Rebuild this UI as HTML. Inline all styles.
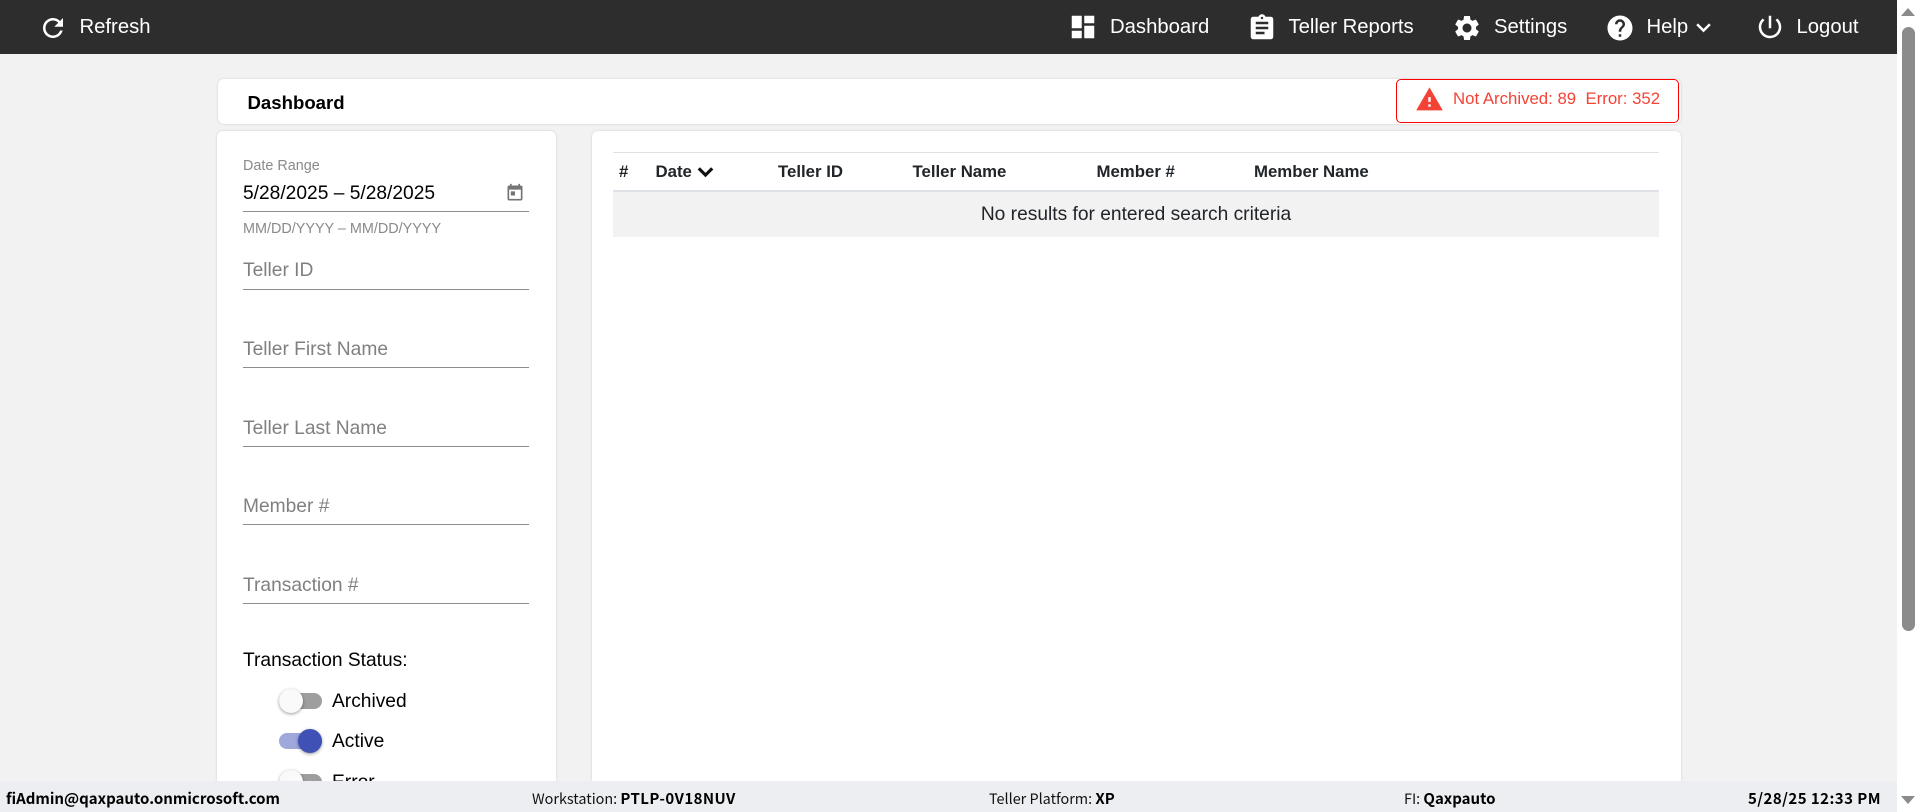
<!DOCTYPE html>
<html lang="en">
<head>
<meta charset="utf-8">
<title>Dashboard</title>
<style>
html,body{margin:0;padding:0;width:1920px;height:812px;overflow:hidden;background:#f2f2f2;font-family:"Liberation Sans",Arial,sans-serif;color:#000}
#root{position:relative;width:1920px;height:812px;overflow:hidden}
.a{position:absolute}
.t{position:absolute;white-space:nowrap;line-height:40px;height:40px}
svg{position:absolute;display:block}
#hdr{left:0;top:0;width:1897px;height:54px;background:#2d2d2d}
.n{color:#fff;font-size:20.3px;top:6.5px}
.card{background:#fff;border-radius:6px;box-shadow:0 0 2px rgba(0,0,0,.16)}
.ln{position:absolute;left:243px;width:286px;height:1px;background:#8c8c8c}
.ph{font-size:19.2px;color:#808080;left:243px}
.tog{position:absolute;left:279px;width:43px;height:16px;border-radius:8px;background:#9e9e9e}
.th{position:absolute;width:24px;height:24px;border-radius:50%;background:#fafafa;box-shadow:0 1px 3px rgba(0,0,0,.4)}
.lb{font-size:19.2px;left:332px}
.h{font-size:16.8px;font-weight:bold;color:#212529;top:152px}
#ft{left:0;top:781px;width:1897px;height:31px;background:#eceef1}
.f{font-family:"Noto Sans CJK SC","Liberation Sans",sans-serif;font-size:14.4px;top:-2.5px;color:#111}
.f b{font-weight:bold;color:#000;font-size:15px}
</style>
</head>
<body>
<div id="root">
<div id="hdr" class="a"></div>
<svg style="left:38px;top:12.7px" width="30" height="30" viewBox="0 0 24 24" fill="#fff"><path d="M17.65 6.35C16.2 4.9 14.21 4 12 4c-4.42 0-7.99 3.58-7.99 8s3.57 8 7.99 8c3.73 0 6.84-2.55 7.73-6h-2.08c-.82 2.33-3.04 4-5.65 4-3.31 0-6-2.69-6-6s2.69-6 6-6c1.66 0 3.14.69 4.22 1.78L13 11h7V4l-2.35 2.35z"/></svg>
<div class="t n" style="left:79.5px">Refresh</div>

<svg style="left:1068px;top:12px" width="30" height="30" viewBox="0 0 24 24" fill="#fff"><path d="M3 13h8V3H3v10zm0 8h8v-6H3v6zm10 0h8V11h-8v10zm0-18v6h8V3h-8z"/></svg>
<div class="t n" style="left:1110px">Dashboard</div>
<svg style="left:1247px;top:12.5px" width="30" height="30" viewBox="0 0 24 24" fill="#fff"><path d="M19 3h-4.18C14.4 1.84 13.3 1 12 1c-1.3 0-2.4.84-2.82 2H5c-1.1 0-2 .9-2 2v14c0 1.1.9 2 2 2h14c1.1 0 2-.9 2-2V5c0-1.1-.9-2-2-2zm-7 0c.55 0 1 .45 1 1s-.45 1-1 1-1-.45-1-1 .45-1 1-1zm2 14H7v-2h7v2zm3-4H7v-2h10v2zm0-4H7V7h10v2z"/></svg>
<div class="t n" style="left:1288.5px">Teller Reports</div>
<svg style="left:1452px;top:12.5px" width="30" height="30" viewBox="0 0 24 24" fill="#fff"><path d="M19.14 12.94c.04-.3.06-.61.06-.94 0-.32-.02-.64-.07-.94l2.03-1.58c.18-.14.23-.41.12-.61l-1.92-3.32c-.12-.22-.37-.29-.59-.22l-2.39.96c-.5-.38-1.03-.7-1.62-.94l-.36-2.54c-.04-.24-.24-.41-.48-.41h-3.84c-.24 0-.43.17-.47.41l-.36 2.54c-.59.24-1.13.57-1.62.94l-2.39-.96c-.22-.08-.47 0-.59.22L2.74 8.87c-.12.21-.08.47.12.61l2.03 1.58c-.05.3-.09.63-.09.94s.02.64.07.94l-2.03 1.58c-.18.14-.23.41-.12.61l1.92 3.32c.12.22.37.29.59.22l2.39-.96c.5.38 1.03.7 1.62.94l.36 2.54c.05.24.24.41.48.41h3.84c.24 0 .44-.17.47-.41l.36-2.54c.59-.24 1.13-.56 1.62-.94l2.39.96c.22.08.47 0 .59-.22l1.92-3.32c.12-.22.07-.47-.12-.61l-2.01-1.58zM12 15.6c-1.98 0-3.6-1.62-3.6-3.6s1.62-3.6 3.6-3.6 3.6 1.62 3.6 3.6-1.62 3.6-3.6 3.6z"/></svg>
<div class="t n" style="left:1494px">Settings</div>
<svg style="left:1605px;top:12.5px" width="30" height="30" viewBox="0 0 24 24" fill="#fff"><path d="M12 2C6.48 2 2 6.48 2 12s4.48 10 10 10 10-4.48 10-10S17.52 2 12 2zm1 17h-2v-2h2v2zm2.07-7.75l-.9.92C13.45 12.9 13 13.5 13 15h-2v-.5c0-1.1.45-2.1 1.17-2.83l1.24-1.26c.37-.36.59-.86.59-1.41 0-1.1-.9-2-2-2s-2 .9-2 2H8c0-2.21 1.79-4 4-4s4 1.79 4 4c0 .88-.36 1.68-.93 2.25z"/></svg>
<div class="t n" style="left:1646.5px">Help</div>
<svg style="left:1688.5px;top:12.5px" width="29" height="29" viewBox="0 0 24 24" fill="#fff"><path d="M7.41 8.59L12 13.17l4.59-4.58L18 10l-6 6-6-6 1.41-1.41z"/></svg>
<svg style="left:1754.6px;top:12.3px" width="30" height="30" viewBox="0 0 24 24" fill="#fff"><path d="M13 3h-2v10h2V3zm4.83 2.17l-1.42 1.42C17.99 7.86 19 9.81 19 12c0 3.87-3.13 7-7 7s-7-3.13-7-7c0-2.19 1.01-4.14 2.58-5.42L6.17 5.17C4.23 6.82 3 9.26 3 12c0 4.97 4.03 9 9 9s9-4.03 9-9c0-2.74-1.23-5.18-3.17-6.83z"/></svg>
<div class="t n" style="left:1796.5px">Logout</div>

<!-- title bar -->
<div class="a card" style="left:218px;top:79px;width:1463px;height:45px"></div>
<div class="t" style="left:247.5px;top:82.5px;font-size:18.6px;font-weight:bold">Dashboard</div>
<div class="a" style="left:1396px;top:79px;width:281px;height:42px;border:1px solid #f00;border-radius:5px;background:#fff"></div>
<svg style="left:1415px;top:85px" width="29" height="29" viewBox="0 0 24 24" fill="#f44336"><path d="M1 21h22L12 2 1 21zm12-3h-2v-2h2v2zm0-4h-2v-4h2v4z"/></svg>
<div class="t" style="left:1453px;top:79px;font-size:16.8px;color:#f44336;white-space:pre">Not Archived: 89  Error: 352</div>

<!-- side panel -->
<div class="a card" style="left:217px;top:131px;width:339px;height:650px;border-radius:6px 6px 0 0"></div>
<div class="t" style="left:243px;top:146px;font-size:14.4px;color:#8a8a8a">Date Range</div>
<div class="t" style="left:243px;top:174px;font-size:19.2px">5/28/2025 – 5/28/2025</div>
<svg style="left:504.5px;top:183px" width="20" height="20" viewBox="0 0 24 24" fill="#757575"><path d="M19 3h-1V1h-2v2H8V1H6v2H5c-1.11 0-1.99.9-1.99 2L3 19c0 1.1.89 2 2 2h14c1.1 0 2-.9 2-2V5c0-1.1-.9-2-2-2zm0 16H5V8h14v11zM7 10h5v5H7z"/></svg>
<div class="ln" style="top:211px"></div>
<div class="t" style="left:243px;top:208.5px;font-size:14.4px;color:#8a8a8a">MM/DD/YYYY – MM/DD/YYYY</div>

<div class="t ph" style="top:251px">Teller ID</div><div class="ln" style="top:289px"></div>
<div class="t ph" style="top:330px">Teller First Name</div><div class="ln" style="top:367px"></div>
<div class="t ph" style="top:409px">Teller Last Name</div><div class="ln" style="top:446px"></div>
<div class="t ph" style="top:487px">Member #</div><div class="ln" style="top:524px"></div>
<div class="t ph" style="top:566px">Transaction #</div><div class="ln" style="top:603px"></div>

<div class="t" style="left:243px;top:640.5px;font-size:19.2px">Transaction Status:</div>
<div class="tog" style="top:693px"></div><div class="th" style="left:279px;top:689px"></div>
<div class="t lb" style="top:682px">Archived</div>
<div class="tog" style="top:733px;background:#9fa8da"></div><div class="th" style="left:298px;top:729px;background:#3f51b5"></div>
<div class="t lb" style="top:722px">Active</div>
<div class="tog" style="top:774px"></div><div class="th" style="left:279px;top:770px"></div>
<div class="t lb" style="top:763px">Error</div>

<!-- main panel -->
<div class="a card" style="left:592px;top:131px;width:1089px;height:650px;border-radius:6px 6px 0 0"></div>
<div class="a" style="left:613px;top:152px;width:1046px;height:1px;background:#dee2e6"></div>
<div class="t h" style="left:619px">#</div>
<div class="t h" style="left:655.5px">Date</div>
<svg style="left:696px;top:162px" width="19" height="19" viewBox="0 0 24 24" fill="none" stroke="#111" stroke-width="4"><path d="M3.5 8L12 16.5 20.500 8"/></svg>
<div class="t h" style="left:778px">Teller ID</div>
<div class="t h" style="left:912.500px">Teller Name</div>
<div class="t h" style="left:1096.500px">Member #</div>
<div class="t h" style="left:1254px">Member Name</div>
<div class="a" style="left:613px;top:190px;width:1046px;height:2px;background:#dee2e6"></div>
<div class="a" style="left:613px;top:192px;width:1046px;height:45px;background:#f2f2f2"></div>
<div class="t" style="left:613px;width:1046px;text-align:center;top:194.5px;font-size:19.2px;color:#212529">No results for entered search criteria</div>

<!-- footer -->
<div id="ft" class="a">
<div class="t f" style="left:6px"><b>fiAdmin@qaxpauto.onmicrosoft.com</b></div>
<div class="t f" style="left:532px">Workstation: <b style="letter-spacing:.42px">PTLP-0V18NUV</b></div>
<div class="t f" style="left:989px">Teller Platform: <b>XP</b></div>
<div class="t f" style="left:1404px">FI: <b>Qaxpauto</b></div>
<div class="t f" style="left:1748px"><b style="letter-spacing:.45px">5/28/25 12:33 PM</b></div>
</div>

<!-- scrollbar -->
<div class="a" style="left:1897px;top:0;width:23px;height:812px;background:#fff"></div>
<div class="a" style="left:1902px;top:27px;width:13px;height:604px;background:#8b8b8b;border-radius:7px"></div>
<div class="a" style="left:1901px;top:8px;width:0;height:0;border-left:7.5px solid transparent;border-right:7.5px solid transparent;border-bottom:8px solid #8b8b8b"></div>
<div class="a" style="left:1901px;top:796px;width:0;height:0;border-left:7.5px solid transparent;border-right:7.5px solid transparent;border-top:8px solid #8b8b8b"></div>
</div>
</body>
</html>
